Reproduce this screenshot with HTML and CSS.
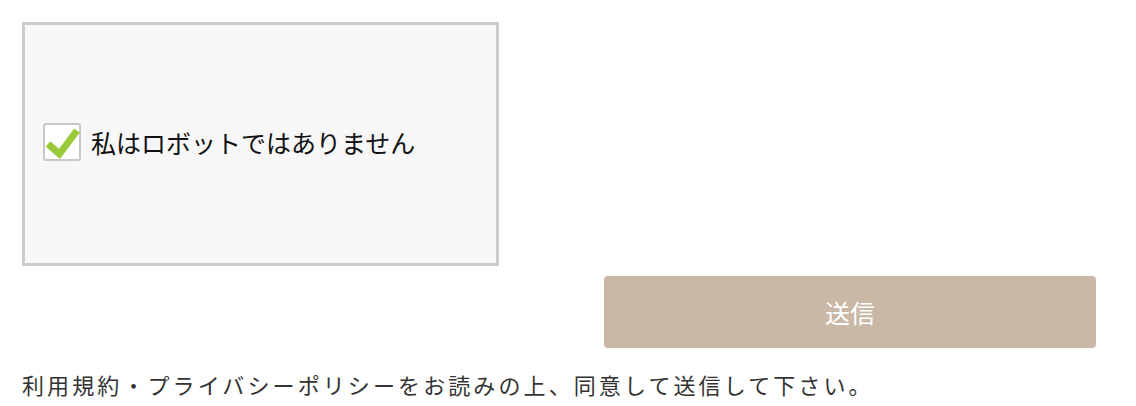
FILE: index.html
```html
<!DOCTYPE html>
<html lang="ja">
<head>
<meta charset="utf-8">
<link rel="stylesheet" href="styles.css">
</head>
<body>
<div class="form">
  <div class="captcha">
    <span class="check">
      <svg width="38" height="38" viewBox="0 0 38 38"><path d="M5 21 L16.5 31 L34 7.5" fill="none" stroke="#9ac93a" stroke-width="7" stroke-linejoin="miter"/></svg>
    </span>
    <span class="label">私はロボットではありません</span>
  </div>
  <button class="submit" type="button">送信</button>
  <p class="note">利用規約・プライバシーポリシーをお読みの上、同意して送信して下さい。</p>
</div>
</body>
</html>
```
FILE: styles.css
```css
html, body {
  margin: 0;
  padding: 0;
  background: #fff;
}
body {
  font-family: "Noto Sans CJK JP", "Noto Sans", sans-serif;
}
.form {
  width: 1074px;
  padding: 22px 0 0 22px;
  display: flex;
  flex-direction: column;
}
.captcha {
  box-sizing: border-box;
  width: 477px;
  height: 244px;
  border: 3px solid #cccccc;
  background: #f7f7f7;
  display: flex;
  align-items: center;
  padding: 0 0 4px 18px;
  gap: 10px;
}
.check {
  box-sizing: border-box;
  width: 38px;
  height: 38px;
  border: 2px solid #c8c8c8;
  border-radius: 3px;
  background: #fff;
  position: relative;
  flex: none;
}
.check svg {
  position: absolute;
  left: -2px;
  top: -2px;
}
.label {
  font-size: 25px;
  color: #111;
  line-height: 1;
}
.submit {
  align-self: flex-end;
  margin-top: 10px;
  width: 492px;
  height: 72px;
  border: none;
  border-radius: 4px;
  background: #c9b8a5;
  color: #fff;
  font-family: "Noto Sans CJK JP", sans-serif;
  font-size: 25px;
  padding: 0;
}
.note {
  margin: 21px 0 0 0;
  font-size: 22px;
  line-height: 30px;
  letter-spacing: 3.1px;
  color: #333;
}
```
